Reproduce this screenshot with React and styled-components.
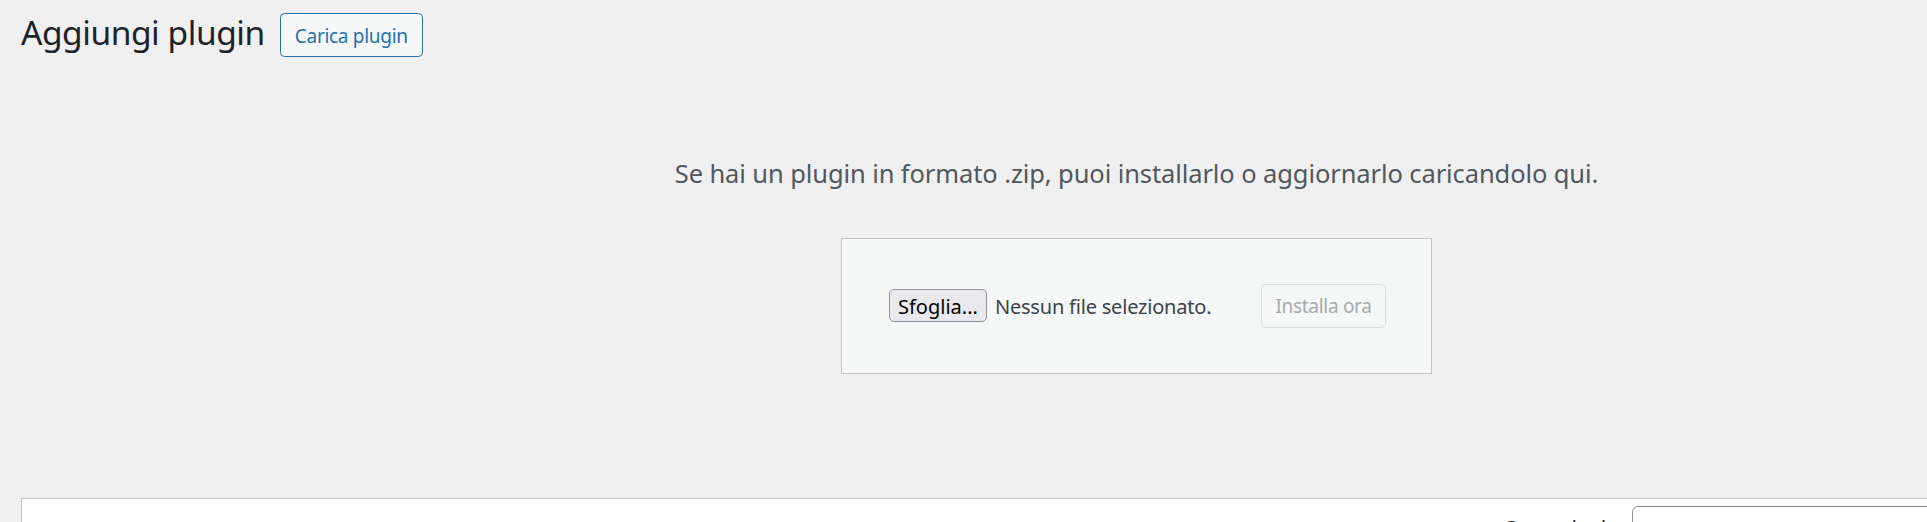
import React from "react";
import styled, { createGlobalStyle } from "styled-components";

const GlobalStyle = createGlobalStyle`
  html,
  body {
    margin: 0;
    padding: 0;
    overflow: hidden;
    background: #f0f0f1;
  }
  body {
    font-family: "Noto Sans", "Open Sans", Arial, sans-serif;
    color: #3c434a;
  }
`;

export default function App() {
  return (
    <>
      <GlobalStyle />
      <Wrap>
        <Header>
          <Title>Aggiungi plugin</Title>
          <TitleAction type="button">Carica plugin</TitleAction>
        </Header>

        <UploadArea>
          <InstallHelp>
            Se hai un plugin in formato .zip, puoi installarlo o aggiornarlo
            caricandolo qui.
          </InstallHelp>
          <UploadForm>
            <FileField>
              <BrowseButton type="button">Sfoglia...</BrowseButton>
              <FileName>Nessun file selezionato.</FileName>
            </FileField>
            <InstallButton type="button" disabled>
              Installa ora
            </InstallButton>
          </UploadForm>
        </UploadArea>

        <FilterBar>
          <SearchBox>
            <SearchLabel>Cerca plugin</SearchLabel>
            <SearchInput type="search" />
          </SearchBox>
        </FilterBar>
      </Wrap>
    </>
  );
}

// the admin screen is wider than the window, so the wrap runs off the right edge
const Wrap = styled.div`
  width: 2231px;
  margin-left: 21px;
`;

const Header = styled.div`
  display: flex;
  align-items: flex-start;
  height: 58px;
  padding-top: 10px;
  box-sizing: border-box;
`;

const Title = styled.h1`
  margin: 0;
  font-size: 33.5px;
  line-height: 44.85px;
  font-weight: 400;
  color: #1d2327;
  letter-spacing: -0.45px;
  white-space: nowrap;
`;

const TitleAction = styled.button`
  display: inline-flex;
  align-items: center;
  justify-content: center;
  margin: 3px 0 0 15px;
  width: 143px;
  height: 44px;
  padding: 2px 0 0;
  box-sizing: border-box;
  font-family: inherit;
  font-size: 19px;
  letter-spacing: -0.3px;
  white-space: nowrap;
  color: #2271b1;
  background: #f6f7f7;
  border: 1px solid #2271b1;
  border-radius: 4.5px;
  cursor: pointer;
`;

const UploadArea = styled.div`
  display: flex;
  flex-direction: column;
  align-items: center;
`;

const InstallHelp = styled.p`
  margin: 96px 0 0;
  font-size: 25.5px;
  line-height: 38px;
  color: #50575e;
  text-align: center;
  letter-spacing: -0.1px;
  white-space: nowrap;
`;

const UploadForm = styled.form`
  display: flex;
  align-items: center;
  justify-content: space-between;
  margin-top: 45.5px;
  width: 591px;
  height: 136px;
  padding: 0 45px;
  box-sizing: border-box;
  background: #f6f7f7;
  border: 1px solid #c3c4c7;
`;

const FileField = styled.div`
  display: flex;
  align-items: center;
  gap: 8px;
  margin-left: 2px;
`;

const BrowseButton = styled.button`
  height: 33px;
  padding: 1px 8px 0;
  font-family: inherit;
  font-size: 20px;
  color: #000;
  background: #e9e9ed;
  border: 1px solid #8f8f9d;
  border-radius: 5px;
  white-space: nowrap;
`;

const FileName = styled.span`
  font-size: 20px;
  color: #3c434a;
  letter-spacing: -0.2px;
  white-space: nowrap;
  padding-top: 2px;
`;

const InstallButton = styled.button`
  width: 125px;
  height: 44px;
  padding: 0;
  font-family: inherit;
  font-size: 19px;
  letter-spacing: -0.3px;
  white-space: nowrap;
  color: #a7aaad;
  background: #f6f7f7;
  border: 1px solid #dcdcde;
  border-radius: 4.5px;
`;

const FilterBar = styled.div`
  display: flex;
  justify-content: flex-end;
  margin-top: 124px;
  height: 120px;
  padding: 0 15px;
  background: #fff;
  border: 1px solid #c3c4c7;
  box-shadow: 0 1.5px 1.5px rgba(0, 0, 0, 0.04);
`;

const SearchBox = styled.div`
  display: flex;
  align-items: flex-start;
  gap: 14px;
`;

const SearchLabel = styled.label`
  margin-top: 14px;
  font-size: 19.5px;
  line-height: 29.25px;
  color: #1d2327;
  white-space: nowrap;
`;

const SearchInput = styled.input`
  margin-top: 7.7px;
  width: 604px;
  height: 45px;
  box-sizing: border-box;
  border: 1px solid #8c8f94;
  border-radius: 6px;
  background: #fff;
`;
